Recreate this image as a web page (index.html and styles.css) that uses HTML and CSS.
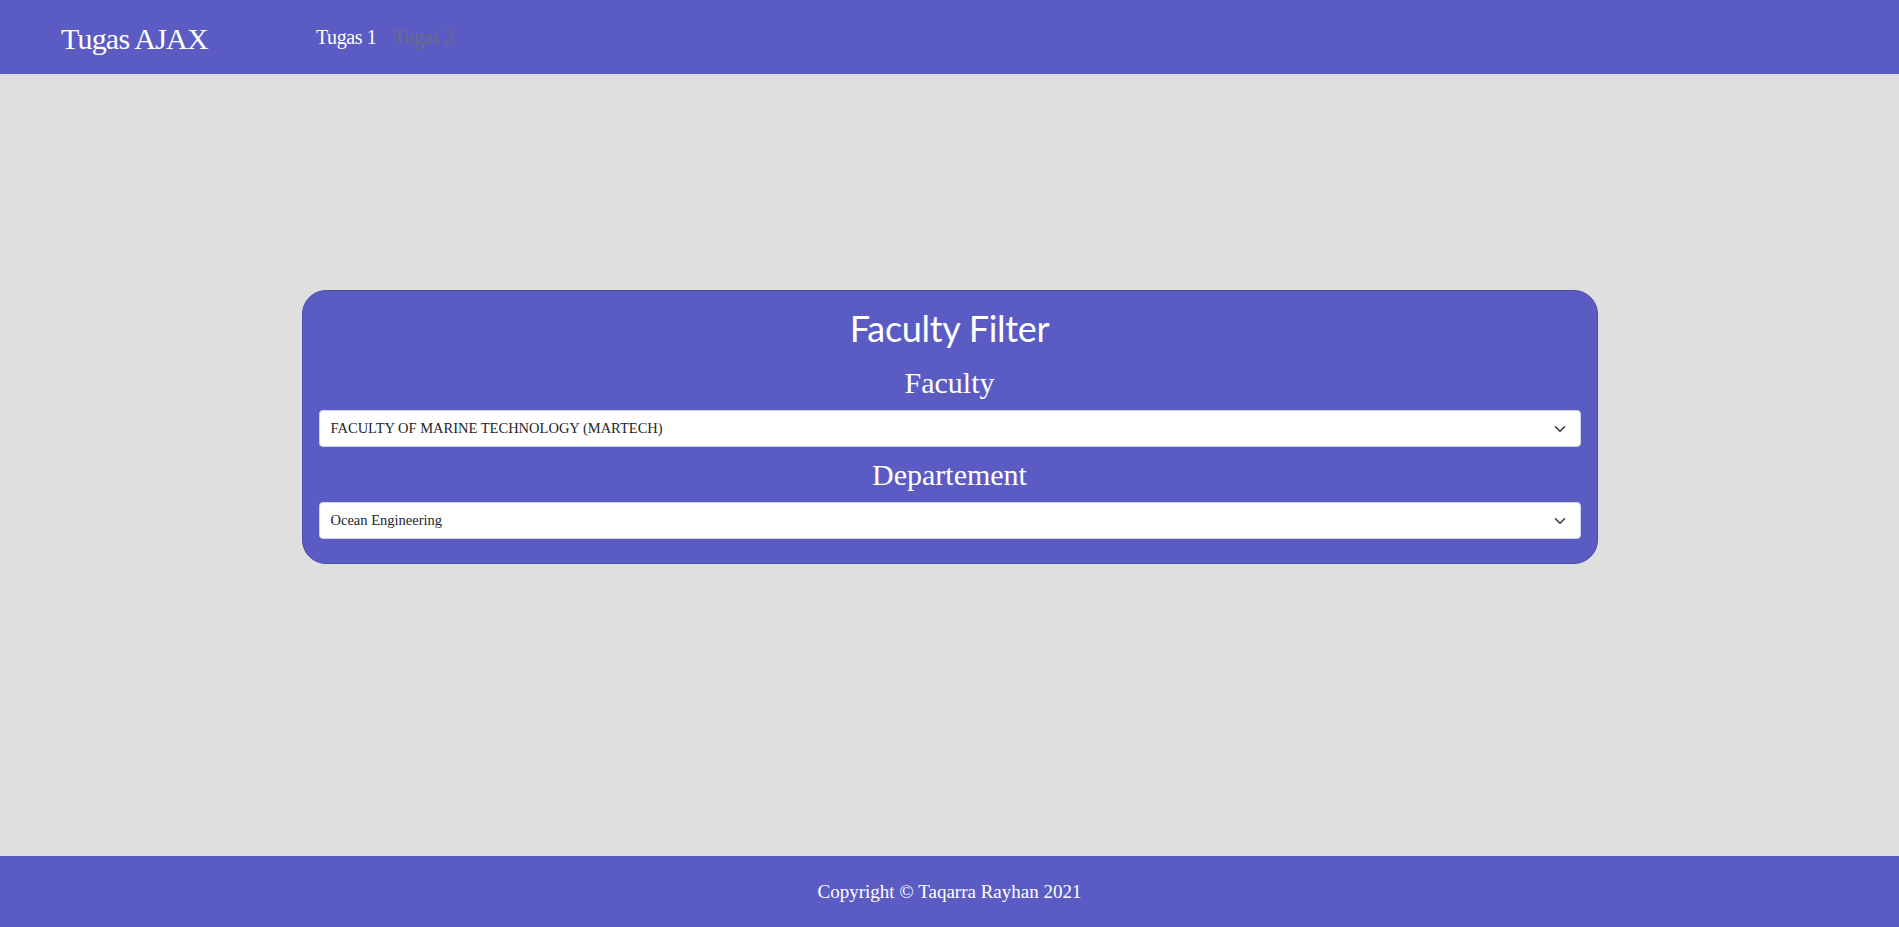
FILE: index.html
```html
<!DOCTYPE html>
<html lang="id">
<head>
<meta charset="utf-8">
<title>Tugas AJAX</title>
<link rel="stylesheet" href="styles.css">
</head>
<body>
<header class="navbar">
  <a class="brand" href="#">Tugas AJAX</a>
  <nav class="nav">
    <a class="nav-link active" href="#">Tugas 1</a>
    <a class="nav-link" href="#">Tugas 2</a>
  </nav>
</header>
<main class="main">
  <section class="card">
    <h1 class="card-title">Faculty Filter</h1>
    <h2 class="label">Faculty</h2>
    <div class="select">
      <span class="select-text">FACULTY OF MARINE TECHNOLOGY (MARTECH)</span>
      <svg class="chev" width="12" height="8" viewBox="0 0 12 8"><path d="M1.5 1.8 L6 6.2 L10.5 1.8" fill="none" stroke="#343a40" stroke-width="1.6" stroke-linecap="round" stroke-linejoin="round"/></svg>
    </div>
    <h2 class="label">Departement</h2>
    <div class="select">
      <span class="select-text">Ocean Engineering</span>
      <svg class="chev" width="12" height="8" viewBox="0 0 12 8"><path d="M1.5 1.8 L6 6.2 L10.5 1.8" fill="none" stroke="#343a40" stroke-width="1.6" stroke-linecap="round" stroke-linejoin="round"/></svg>
    </div>
  </section>
</main>
<footer class="footer">Copyright © Taqarra Rayhan 2021</footer>
</body>
</html>
```

FILE: styles.css
```css
* { box-sizing: border-box; }
html, body { height: 100%; }
body {
  margin: 0;
  min-height: 100vh;
  display: flex;
  flex-direction: column;
  background: #dfdfdf;
  font-family: "Liberation Serif", "DejaVu Serif", serif;
  color: #212529;
}
.navbar {
  height: 74px;
  background: #5b5cc3;
  display: flex;
  align-items: center;
  padding: 0 0 0 61px;
}
.brand {
  color: #fff;
  text-decoration: none;
  font-size: 30px;
  letter-spacing: -0.8px;
  width: 255px;
  line-height: 1;
  position: relative;
  top: 2px;
}
.nav { display: flex; gap: 17px; }
.nav-link {
  font-size: 20px;
  letter-spacing: -0.4px;
  color: #6b6c82;
  text-decoration: none;
}
.nav-link.active { color: #fff; }
.main {
  flex: 1;
  padding-top: 216px;
  display: flex;
  justify-content: center;
  align-items: flex-start;
}
.card {
  width: 1296px;
  background: #5b5cc3;
  border: 1px solid #4d4ea9;
  border-radius: 24px;
  padding: 16px 16px 24px;
  display: flex;
  flex-direction: column;
}
.card-title {
  margin: 0 0 5px;
  text-align: center;
  color: #fff;
  font-family: Lato, "Open Sans", sans-serif;
  font-weight: 400;
  font-size: 36px;
  line-height: 1.2;
  letter-spacing: -0.3px;
}
.label {
  margin: 10px 0 9px;
  text-align: center;
  color: #fff;
  font-weight: 400;
  font-size: 30px;
  line-height: 36px;
}
.select {
  height: 37px;
  background: #fff;
  border: 1px solid #ced4da;
  border-radius: 4px;
  display: flex;
  align-items: center;
  justify-content: space-between;
  padding: 0 14px 0 11px;
}
.select-text { font-size: 14.5px; color: #212529; }
.chev { display: block; }
.footer {
  height: 71px;
  background: #5b5cc3;
  color: #fff;
  display: flex;
  align-items: center;
  justify-content: center;
  font-size: 19px;
}
```
